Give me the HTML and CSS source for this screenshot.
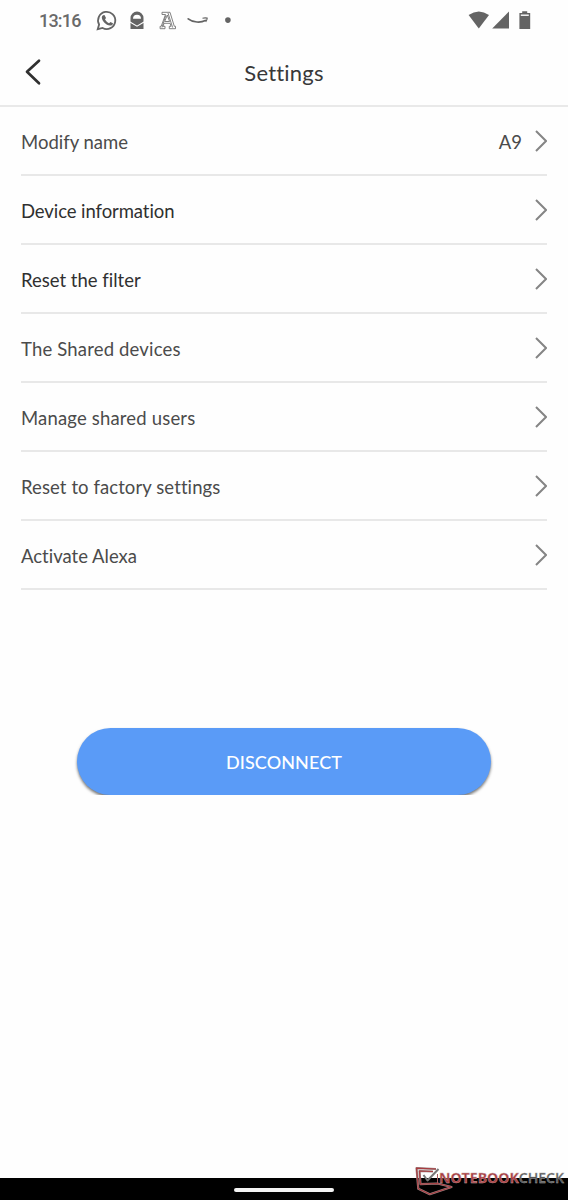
FILE: index.html
```html
<!DOCTYPE html>
<html lang="en">
<head>
<meta charset="utf-8">
<title>Settings</title>
<link rel="stylesheet" href="styles.css">
</head>
<body>
<div class="screen">
  <div class="status">
    <span class="time">13:16</span>
    <svg class="status-icons" width="140" height="40" viewBox="0 0 140 40">
      <path d="M2.7 29.2 4.1 24.5A8.6 8.6 0 1 1 7.6 28Z" fill="none" stroke="#646464" stroke-width="1.8"/>
      <path d="M8 15.3 9.5 15 11 18 10 19.5Q11.5 22 14 23.2L15.5 21.9 18 23.2Q17.8 25.6 15 25.6C11 25.3 7 21 6.8 17.5Q6.8 16 8 15.3Z" fill="#646464"/>
      <path d="M35.5 29V18a6.5 6.5 0 0 1 13 0V29Z" fill="#646464"/>
      <path d="M38 18.8a4 4 0 0 1 8 0Z" fill="#fff"/>
      <path d="M35 22 42 26.2 49 22" fill="none" stroke="#fff" stroke-width="1.1"/>
      <path d="M67 12.3H75L79.3 26.3H80.5V28.7H74.3V26.3H76L75.1 23.3H69L68 26.3H70V28.7H65.1V26.3H66.2L70.5 14.5H67ZM72.3 15 69.7 21.5H74.6ZM73 13 77.6 27.5M70.7 15.5 67 27.5" fill="none" stroke="#747474" stroke-width=".9"/>
      <path d="M93.2 18.8C98 22.7 106 22.8 110.3 20.5" fill="none" stroke="#646464" stroke-width="1.7" stroke-linecap="round"/>
      <path d="M107.5 18.2Q110 17.6 112.2 18.1 112.1 20 110.7 21.8" fill="none" stroke="#646464" stroke-width="1.1"/>
      <circle cx="132.9" cy="20.1" r="2.8" fill="#646464"/>
    </svg>
    <svg class="system-icons" width="64" height="40" viewBox="0 0 64 40">
      <g fill="#646464">
        <path d="M.6 15.1Q10.8 7.8 21 15.1L10.8 28.5Z"/>
        <path d="M24.2 28.4 41 11.5V28.4Z"/>
        <path d="M51.4 13H54.2v-1.8h5V13h3v16H51.4Z"/>
      </g>
      <path d="M52.8 15.2h8" stroke="#fff" stroke-width="1.4"/>
    </svg>
  </div>
  <header class="header">
    <svg class="back" width="20" height="30" viewBox="0 0 20 30"><path d="M16 3.7 4 14.8 16 26.2" fill="none" stroke="#303030" stroke-width="2.7" stroke-linecap="round" stroke-linejoin="round"/></svg>
    <h1 class="title">Settings</h1>
  </header>
  <main class="list">
    <div class="row"><span class="label name">Modify name</span><span class="value">A9</span><svg class="chevron" viewBox="0 0 12 24"><path d="M1 2 11 12 1 22"/></svg></div>
    <div class="row dark"><span class="label info">Device information</span><svg class="chevron" viewBox="0 0 12 24"><path d="M1 2 11 12 1 22"/></svg></div>
    <div class="row dark"><span class="label filter">Reset the filter</span><svg class="chevron" viewBox="0 0 12 24"><path d="M1 2 11 12 1 22"/></svg></div>
    <div class="row"><span class="label shared">The Shared devices</span><svg class="chevron" viewBox="0 0 12 24"><path d="M1 2 11 12 1 22"/></svg></div>
    <div class="row"><span class="label users">Manage shared users</span><svg class="chevron" viewBox="0 0 12 24"><path d="M1 2 11 12 1 22"/></svg></div>
    <div class="row"><span class="label factory">Reset to factory settings</span><svg class="chevron" viewBox="0 0 12 24"><path d="M1 2 11 12 1 22"/></svg></div>
    <div class="row"><span class="label alexa">Activate Alexa</span><svg class="chevron" viewBox="0 0 12 24"><path d="M1 2 11 12 1 22"/></svg></div>
  </main>
  <div class="action"><button class="disconnect">DISCONNECT</button></div>
  <footer class="navbar"><span class="handle"></span></footer>
  <svg class="watermark" width="154" height="35" viewBox="0 0 154 35">
    <g fill="none" stroke-linejoin="round">
      <path d="M22 4 2.5 3.2 4.3 23.8 15.8 29.2 37.5 22 23.5 18.5 6.5 19.2 5.5 6 19 6.5" stroke="#9b8585" stroke-width="2.2"/>
      <path d="M22 4 2.5 3.2 4.3 23.8 15.8 29.2 37.5 22 23.5 18.5 6.5 19.2 5.5 6 19 6.5" stroke="#a93c40" stroke-width="1.2"/>
      <path d="M23.5 9V18.5" stroke="#a85b5e" stroke-width="1"/>
      <path d="M9.5 10 13.5 15.5 24.5 4" stroke="#777" stroke-width="2"/>
    </g>
    <text class="mark" x="25" y="18" textLength="125" lengthAdjust="spacingAndGlyphs"><tspan class="notebook">NOTEBOOK</tspan><tspan class="check">CHECK</tspan></text>
  </svg>
</div>
</body>
</html>
```
FILE: styles.css
```css
* { box-sizing: border-box; }
body { margin: 0; background: #fefefe; font-family: Lato, sans-serif; color: #4b4b4b; font-variant-ligatures: none; }
.screen { position: relative; width: 568px; height: 1200px; display: flex; flex-direction: column; overflow: hidden; }
.status { height: 40px; flex: none; display: flex; padding: 0 36px 0 39px; }
.time { width: 56px; font: 500 18px/42px Roboto, sans-serif; color: #6a6a6a; letter-spacing: -.8px; white-space: nowrap; }
.status-icons { flex: none; }
.system-icons { margin-left: auto; }
.header { height: 67px; flex: none; display: grid; grid-template-columns: 1fr auto 1fr; border-bottom: 2px solid #e9e9e9; }
.back { margin: 17px 0 0 23px; }
.title { margin: 18px 0 0; font-size: 22px; line-height: 30px; font-weight: 400; color: #383838; letter-spacing: .2px; }
.list { padding: 0 21px; }
.row { height: 69px; display: flex; align-items: center; border-bottom: 2px solid #e8e8e8; }
.label, .value { font-size: 18.5px; line-height: 24px; padding-top: 2px; white-space: nowrap; }
.dark { color: #303030; }
.info { letter-spacing: -.08px; }
.shared { letter-spacing: .17px; }
.users { letter-spacing: .17px; }
.factory { letter-spacing: .09px; }
.value { margin-left: auto; }
.chevron { width: 12px; height: 24px; margin-left: auto; flex: none; fill: none; stroke: #858585; stroke-width: 2; }
.value + .chevron { margin-left: 13px; }
.action { padding: 138px 77px 0; }
.disconnect { display: block; width: 414px; height: 67px; padding: 0; border: 0; border-radius: 34px; background: #5a9bf7; color: #fff; font: 500 18px Lato, sans-serif; letter-spacing: .1px; box-shadow: 0 2px 3px #777; clip-path: inset(-2px -4px 0); }
.navbar { height: 22px; margin-top: auto; display: flex; justify-content: center; padding-top: 10px; background: #000; }
.handle { width: 100px; height: 4px; border-radius: 2px; background: #f3f3f3; }
.watermark { position: absolute; left: 414px; top: 1165px; }
.mark { font: 700 15px "Open Sans", sans-serif; stroke-width: .4px; }
.notebook { fill: #a93c40; stroke: #c8aaaa; }
.check { fill: #555; stroke: #aaa; font-weight: 600; }
```
